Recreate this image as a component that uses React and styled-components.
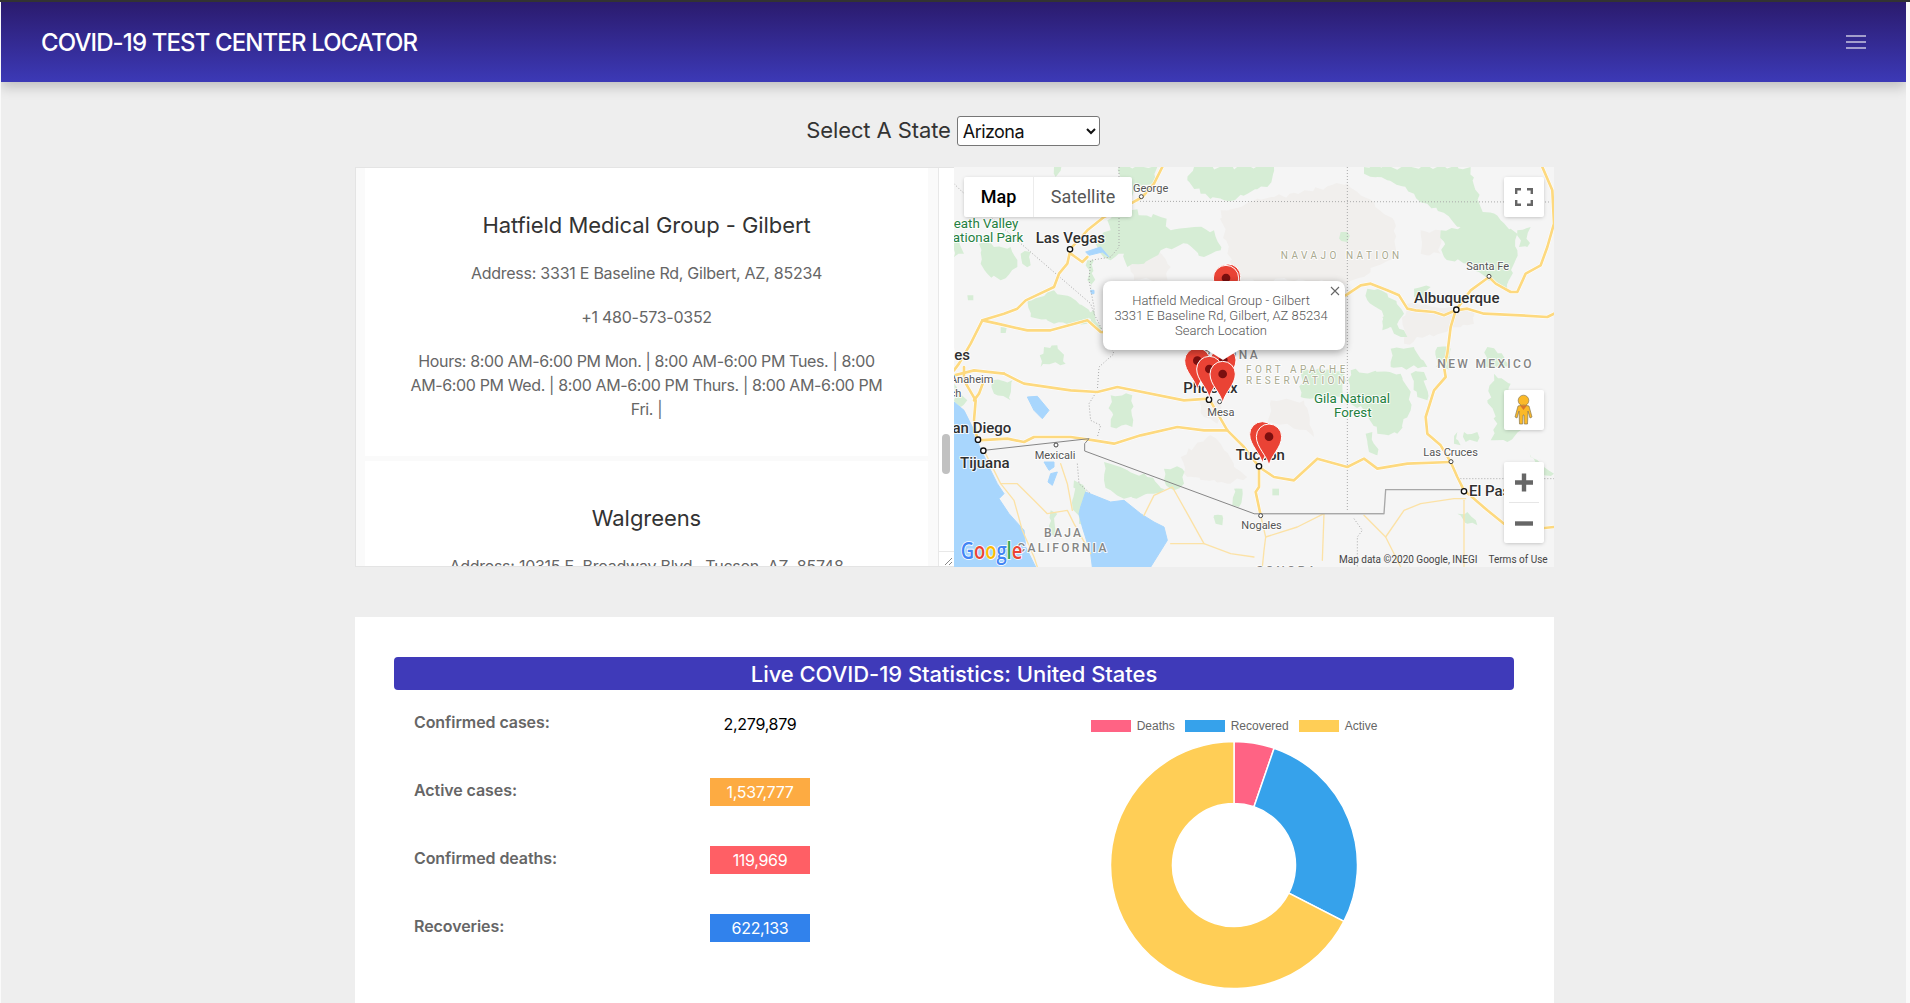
import React from "react";
import styled, { createGlobalStyle, css } from "styled-components";

const Global = createGlobalStyle`
  html, body { margin: 0; padding: 0; height: 100%; overflow: hidden; background: #fafafa; }
  body { font-family: Inter, "Liberation Sans", sans-serif; }
  #root { height: 100%; }
`;

const Page = styled.div`
  height: 1003px;
  overflow: hidden;
  display: flex;
  flex-direction: column;
  border-top: 2px solid #333;
  box-sizing: border-box;
`;
const Shell = styled.div`
  flex: 1;
  margin: 0 4px 0 1px;
  background: #eee;
  min-height: 0;
  overflow: hidden;
`;
const Navbar = styled.header`
  height: 80px;
  display: flex;
  align-items: center;
  justify-content: space-between;
  padding: 0 40px 0 40px;
  background: linear-gradient(180deg, #2b1b6e 0%, #3c39b6 100%);
  box-shadow: 0 5px 12px rgba(0, 0, 0, 0.2);
`;
const Brand = styled.div`
  color: #fff;
  font-size: 24px;
  font-weight: 500;
  letter-spacing: -0.88px;
  white-space: nowrap;
`;
const Burger = styled.div`
  width: 20px;
  display: flex;
  flex-direction: column;
  gap: 4px;
  span { display: block; height: 2px; background: rgba(255, 255, 255, 0.55); }
`;
const Content = styled.main`
  width: 1199px;
  margin-left: 354px;
`;
const SelectRow = styled.div`
  display: flex;
  align-items: center;
  justify-content: center;
  gap: 6px;
  height: 30px;
  margin: 34px 3px 21px 0;
`;
const SelectLabel = styled.label`
  margin-top: -3px;
  font-size: 22px;
  color: #333;
  letter-spacing: -0.1px;
`;
const StateSelect = styled.select`
  width: 143px;
  height: 30px;
  font: 400 18px Inter, sans-serif;
  letter-spacing: -0.55px;
  color: #111;
  background: #fff;
  border: 1px solid #767676;
  border-radius: 3px;
  padding: 0 0 0 1px;
`;
const MapSection = styled.section`
  display: flex;
  height: 400px;
  background: #fff;
  box-shadow: 0 0 0 1px #e6e6e6 inset;
`;
const ListPane = styled.div`
  position: relative;
  width: 599px;
  flex: none;
  overflow: hidden;
  box-sizing: border-box;
  border: 1px solid #e4e4e4;
  border-right: none;
  background: #fafafa;
  padding: 0 26px 0 9px;
`;
const Place = styled.article`
  background: #fff;
  padding: 41px 42px 35px;
  margin-bottom: 5px;
  text-align: center;
`;
const PlaceName = styled.h3`
  margin: 0 0 20px;
  font-size: 22px;
  line-height: 32px;
  font-weight: 400;
  letter-spacing: -0.07px;
  color: #333;
`;
const PlaceLine = styled.p`
  margin: 0 0 20px;
  font-size: 16px;
  line-height: 24px;
  letter-spacing: ${(p) => (p.$tight ? "-0.37px" : "-0.25px")};
  color: #666;
  &:last-child { margin-bottom: 0; }
`;
const ScrollTrack = styled.div`
  position: absolute;
  top: 0;
  right: 0;
  bottom: 0;
  width: 15px;
  background: #fff;
  border-left: 1px solid #e8e8e8;
`;
const ScrollThumb = styled.div`
  position: absolute;
  top: 266px;
  left: 3px;
  width: 8px;
  height: 40px;
  border-radius: 4px;
  background: #c1c1c1;
`;
const Resizer = styled.svg`
  position: absolute;
  left: 0;
  bottom: 0;
  width: 15px;
  height: 14px;
  border-top: 1px solid #e8e8e8;
`;
const MapPane = styled.div`
  position: relative;
  width: 600px;
  flex: none;
  overflow: hidden;
  background: #f5f5f5;
  font-family: Roboto, sans-serif;
`;
const MapCanvas = styled.svg`
  display: block;
  width: 600px;
  height: 400px;
`;
const labelKinds = {
  city: css`font-size: 45px; font-weight: 500; fill: #2f2f2f;`,
  town: css`font-size: 33px; font-weight: 400; fill: #555;`,
  park: css`font-size: 40px; font-weight: 400; fill: #24803f;`,
  state: css`font-size: 36px; font-weight: 500; fill: #858585; letter-spacing: 7px;`,
  land: css`font-size: 30px; font-weight: 400; fill: #a9a98f; letter-spacing: 10.5px;`,
};
const MapLabel = styled.text`
  font-family: Roboto, sans-serif;
  paint-order: stroke;
  stroke: rgba(255, 255, 255, 0.85);
  stroke-width: 6px;
  stroke-linejoin: round;
  ${(p) => labelKinds[p.$kind]}
`;
const ControlBox = styled.div`
  position: absolute;
  top: ${(p) => p.$top}px;
  display: flex;
  background: #fff;
  border-radius: 2px;
  box-shadow: 0 1px 4px -1px rgba(0, 0, 0, 0.3);
`;
const TypeControl = styled(ControlBox)`
  left: 10px;
  height: 40px;
`;
const TypeButton = styled.div`
  width: ${(p) => p.$w}px;
  padding-bottom: 1px;
  display: flex;
  align-items: center;
  justify-content: center;
  font-size: 18px;
  font-weight: ${(p) => (p.$active ? 500 : 400)};
  color: ${(p) => (p.$active ? "#000" : "#565656")};
  & + & { border-left: 1px solid #ececec; }
`;
const SquareControl = styled(ControlBox)`
  right: 10px;
  width: 40px;
  height: ${(p) => p.$h || 40}px;
  flex-direction: column;
  align-items: center;
  justify-content: center;
`;
const ZoomStep = styled.svg`
  width: 40px;
  height: 40px;
  display: block;
`;
const ZoomRule = styled.div`
  width: 30px;
  height: 1px;
  background: #e6e6e6;
`;
const Popup = styled.div`
  position: absolute;
  left: 149px;
  top: 114px;
  width: 242px;
  height: 69px;
  box-sizing: border-box;
  padding: 12px 6px 0 0;
  background: #fff;
  border-radius: 8px;
  box-shadow: 0 2px 7px 1px rgba(0, 0, 0, 0.3);
  text-align: center;
  font-size: 13px;
  font-weight: 300;
  line-height: 15px;
  color: #555;
  &::after {
    content: "";
    position: absolute;
    left: 104px;
    top: 69px;
    border-left: 16px solid transparent;
    border-right: 16px solid transparent;
    border-top: 10px solid #fff;
  }
`;
const PopupClose = styled.svg`
  position: absolute;
  right: 5px;
  top: 5px;
  width: 10px;
  height: 10px;
`;
const Attribution = styled.div`
  position: absolute;
  left: 385px;
  bottom: 2px;
  display: flex;
  gap: 11px;
  font-size: 10px;
  line-height: 10px;
  color: #444;
  white-space: nowrap;
`;
const StatsCard = styled.section`
  margin-top: 50px;
  height: 420px;
  background: #fff;
  padding: 40px 40px 0 39px;
  box-sizing: border-box;
`;
const StatsBanner = styled.h2`
  margin: 0;
  height: 33px;
  line-height: 34px;
  border-radius: 4px;
  background: #3f3ab9;
  color: #fff;
  text-align: center;
  font-size: 22px;
  font-weight: 500;
  letter-spacing: -0.04px;
`;
const StatsBody = styled.div`
  display: grid;
  grid-template-columns: 1fr 1fr;
`;
const StatList = styled.div`
  padding-left: 20px;
`;
const StatRow = styled.div`
  height: 68px;
  display: grid;
  grid-template-columns: 296px 100px;
  align-items: center;
`;
const StatLabel = styled.div`
  margin-top: -5px;
  font-size: 16px;
  font-weight: 600;
  letter-spacing: -0.08px;
  color: #666;
`;
const StatValue = styled.div`
  height: 28px;
  line-height: 28px;
  text-align: center;
  font-size: 16px;
  letter-spacing: -0.3px;
  color: ${(p) => (p.$bg ? "#fff" : "#000")};
  background: ${(p) => p.$bg || "transparent"};
`;
const ChartPane = styled.div`
  display: flex;
  flex-direction: column;
  align-items: center;
  padding-top: 30px;
`;
const Legend = styled.div`
  display: flex;
  gap: 10px;
  height: 12px;
  font: 12px "Liberation Sans", sans-serif;
  color: #666;
`;
const LegendItem = styled.div`
  display: flex;
  align-items: center;
  gap: 6px;
  line-height: 12px;
`;
const Swatch = styled.span`
  width: 40px;
  height: 12px;
  background: ${(p) => p.$c};
`;
const Donut = styled.svg`
  display: block;
  width: 250px;
  height: 250px;
  margin-top: 10px;
`;

const GREEN = [
  "75,230 170,240 190,300 140,340 100,320 80,290",
  "200,260 230,255 230,295 205,290",
  "300,0 322,0 305,30",
  "495,0 610,0 600,50 540,70 530,100 530,130 620,150 650,190 720,180 780,190 800,250 750,270 700,230 620,250 570,290 520,300 510,260 470,280 430,250 420,210 470,190 460,160 495,110",
  "720,0 960,0 940,60 810,100 740,80 700,40",
  "220,400 300,370 350,390 410,440 400,470 300,470 230,450",
  "400,280 420,280 415,370 400,340",
  "395,430 420,430 440,490 410,470",
  "270,540 310,535 335,590 260,600",
  "140,480 158,482 155,498 140,498",
  "40,385 58,385 58,400 42,400",
  "1230,0 1550,0 1580,120 1640,160 1690,200 1680,290 1660,370 1600,340 1540,290 1470,270 1460,190 1520,180 1420,110 1380,80 1300,40 1230,20",
  "1690,190 1730,180 1720,240 1695,240",
  "1240,365 1300,380 1350,440 1330,470 1285,490 1290,450 1240,400",
  "1285,450 1320,440 1350,490 1360,510 1320,500",
  "1380,365 1430,360 1410,400 1380,390",
  "1310,545 1380,540 1420,600 1310,600",
  "1450,540 1490,545 1500,600 1445,600",
  "1600,540 1650,570 1670,600 1590,600",
  "1160,195 1180,195 1180,225 1162,222",
  "1190,610 1340,620 1360,660 1370,730 1330,800 1270,800 1230,730 1190,710",
  "1370,620 1410,615 1420,700 1390,690",
  "1235,800 1255,795 1270,865 1245,855",
  "1510,795 1520,835 1500,830",
  "1530,795 1570,795 1570,825 1535,825",
  "1620,620 1670,650 1660,730 1700,790 1660,825 1610,820 1630,770 1600,700",
  "1710,840 1770,900 1800,920 1770,925",
  "1510,1040 1540,1035 1570,1075 1540,1070",
  "955,965 975,965 975,985 955,985",
  "470,685 535,685 535,780 470,780",
  "630,905 685,905 690,950 660,970 630,940",
  "450,885 500,900 580,930 640,970 600,980 510,995 470,970 450,940",
  "360,940 395,970 385,1030 405,1100 375,1070 355,1000",
  "840,965 865,965 855,1020 835,1015",
  "780,1045 805,1045 805,1075 785,1070",
  "115,640 175,640 170,700 120,680",
  "290,1030 310,1040 300,1110 285,1090",
  "0,200 20,210 30,260 0,270",
  "0,650 40,700 20,720 0,700",
  "1040,610 1170,610 1170,690 1040,690",
];
const BEIGE = [
  "800,130 960,90 1180,50 1320,160 1320,260 1230,330 1180,350 1000,340 860,340 820,260",
  "520,280 610,250 650,300 640,340 540,340",
  "1400,190 1460,190 1460,260 1400,260",
  "950,700 1050,700 1080,810 1000,770 940,770",
  "680,870 770,805 800,830 840,900 880,930 820,950 700,930",
  "735,700 800,700 790,770 750,750",
  "1350,410 1560,430 1560,470 1350,530",
];
const WATER = [
  "0,705 30,730 60,790 75,835 110,910 130,950 150,980 135,995 165,1040 210,1090 215,1140 240,1190 245,1200 0,1200",
  "395,975 420,985 470,1005 510,1000 560,1040 600,1065 630,1080 640,1120 590,1200 415,1200 410,1160 385,1080 375,1040 380,1020",
  "220,690 250,688 285,730 265,755 240,730",
  "270,885 300,885 300,900 285,910",
  "290,920 310,915 295,955 282,945",
  "395,255 440,240 465,270 445,255 405,265",
  "410,370 420,370 420,380 412,380",
];
const MAJOR = [
  "625,0 600,50 565,90 530,110 450,150 400,190 350,245 340,290 315,320 300,360 215,400 190,425 150,440 85,460 50,530 15,590 0,610",
  "350,260 385,285 400,270",
  "85,460 130,470 220,490 290,490 400,460 440,495 500,500",
  "1175,385 1220,355 1250,350 1300,370 1335,385 1360,425 1385,430 1440,435 1470,445 1505,430 1540,425 1590,440 1700,445 1780,450 1800,440",
  "1505,430 1550,370 1605,330 1625,350 1670,375 1690,375 1715,320 1760,295 1780,240 1800,170 1795,70 1765,0",
  "1505,430 1490,480 1480,560 1470,600 1475,630 1440,670 1415,750 1420,800 1460,835 1490,885 1510,930 1530,970 1560,995 1600,1030 1650,1070 1700,1090 1800,1080",
  "915,900 960,930 1020,940 1090,875 1180,900 1230,875 1270,905 1360,890 1490,885",
  "150,620 210,650 350,670 430,675 490,660 690,700 765,695 820,790 870,840 915,900 915,960 905,975 920,1045",
  "70,820 160,815 210,825 240,810 350,810 420,820 480,830 560,805 670,780 750,790 820,790",
  "70,820 60,760 65,700 30,640 30,600",
  "0,625 60,610 150,620",
  "60,700 75,680 90,640",
];
const MINOR = [
  "90,850 140,950 190,950 240,1000 280,1040 340,1030 360,1070 410,1160",
  "140,950 180,1000 205,1090 240,1170 250,1200",
  "320,890 340,950 355,1030",
  "570,1045 600,985 655,960 700,1040 750,1130 830,1160 900,1170",
  "920,1045 935,1110 930,1150 925,1200",
  "1110,1040 1030,1080 935,1110",
  "1110,1040 1105,1180",
  "1230,1045 1295,1110 1350,1030 1400,1010 1500,995 1535,995",
  "1530,1000 1530,1200",
  "1295,1110 1340,1200",
  "650,1130 750,1130",
];
const DOTTED = [
  "540,103 1800,105",
  "1180,0 1180,1035",
  "0,50 20,70 195,225 410,410 420,440",
  "495,0 495,240 470,270 410,280 405,340 420,420 420,440 480,560 435,600 430,670 405,710 410,760 440,775 430,810",
  "1510,935 1800,935",
  "370,890 375,950 410,980",
  "1200,1055 1225,1090 1210,1110 1210,1200",
];
const LABELS = [
  ["George", 537, 75, "town"],
  ["Death Valley", -27, 183, "park"],
  ["National Park", 208, 225, "park", "end"],
  ["Las Vegas", 245, 229, "city"],
  ["Los Angeles", 48, 578, "city", "end"],
  ["Anaheim", 118, 648, "town", "end"],
  ["Long Beach", 22, 690, "town", "end"],
  ["San Diego", 172, 797, "city", "end"],
  ["Tijuana", 18, 902, "city"],
  ["Mexicali", 242, 875, "town"],
  ["Phoenix", 688, 678, "city"],
  ["Mesa", 760, 748, "town"],
  ["Tucson", 845, 878, "city"],
  ["Nogales", 862, 1087, "town"],
  ["BAJA", 270, 1110, "state"],
  ["CALIFORNIA", 190, 1155, "state"],
  ["SONORA", 906, 1224, "state"],
  ["NAVAJO NATION", 980, 275, "land"],
  ["ARIZONA", 918, 575, "state", "end"],
  ["FORT APACHE", 876, 618, "land"],
  ["RESERVATION", 876, 650, "land"],
  ["Gila National", 1080, 708, "park"],
  ["Forest", 1140, 750, "park"],
  ["Santa Fe", 1537, 310, "town"],
  ["Albuquerque", 1380, 407, "city"],
  ["NEW MEXICO", 1450, 604, "state"],
  ["Las Cruces", 1408, 868, "town"],
  ["El Paso", 1545, 988, "city"],
];
const BIG_DOTS = [[348, 247], [915, 898], [765, 698], [72, 818], [88, 851], [1530, 973], [1507, 428]];
const SMALL_DOTS = [[562, 89], [1605, 328], [306, 834], [797, 704], [920, 1046], [1491, 884]];
const PINS = [
  [822, 417], [816, 421], [808, 667], [730, 669], [766, 694], [806, 709], [925, 890], [945, 897],
];

/* Breaks a coarse polygon's straight edges into an irregular terrain outline. */
const roughen = (points, seed) => {
  const pts = points.split(" ").map((p) => p.split(",").map(Number));
  let s = seed * 9301 + 49297;
  const rand = () => {
    s = (s * 9301 + 49297) % 233280;
    return s / 233280 - 0.5;
  };
  const out = [];
  pts.forEach(([x0, y0], i) => {
    const [x1, y1] = pts[(i + 1) % pts.length];
    const len = Math.hypot(x1 - x0, y1 - y0);
    const steps = Math.max(1, Math.round(len / 16));
    for (let k = 0; k < steps; k++) {
      const t = k / steps;
      const amp = k === 0 ? 0 : 16;
      out.push(`${(x0 + (x1 - x0) * t + rand() * amp).toFixed(1)},${(y0 + (y1 - y0) * t + rand() * amp).toFixed(1)}`);
    }
  });
  return out.join(" ");
};

const Pin = ({ x, y }) => (
  <g transform={`translate(${x} ${y})`}>
    <path d="M0 0C-4 -30 -38 -55 -38 -88A38 38 0 1 1 38 -88C38 -55 4 -30 0 0Z" fill="#ea4335" stroke="#fff" strokeWidth="3" />
    <circle cx="0" cy="-88" r="13" fill="#7b0f0f" />
  </g>
);

const MapDrawing = () => (
  <MapCanvas viewBox="0 0 1800 1200">
    <g fill="#f1efed">
      {BEIGE.map((p, i) => <polygon key={p} points={roughen(p, i + 1)} />)}
    </g>
    <g fill="#d6edd5">
      {GREEN.map((p, i) => <polygon key={p} points={roughen(p, i + 11)} />)}
    </g>
    <g fill="#a8d6fd" stroke="#a8d6fd" strokeWidth="3" strokeLinejoin="round">
      {WATER.map((p) => <polygon key={p} points={p} />)}
    </g>
    <g fill="none" stroke="#a9a9a9" strokeWidth="3" strokeDasharray="3 6">
      {DOTTED.map((p) => <polyline key={p} points={p} />)}
    </g>
    <g fill="none" strokeLinejoin="round" strokeLinecap="round">
      {MINOR.map((p) => <polyline key={p} points={p} stroke="#fce2a6" strokeWidth="4" />)}
      {MAJOR.map((p) => <polyline key={p} points={p} stroke="#fff" strokeWidth="11" />)}
      {MAJOR.map((p) => <polyline key={"y" + p} points={p} stroke="#fdd97f" strokeWidth="8" />)}
    </g>
    <polyline points="90,850 405,815 392,830 392,852 900,1040 1290,1040" fill="none" stroke="#868686" strokeWidth="3" />
    <polyline points="900,1040 1290,1040 1295,968 1520,968" fill="none" stroke="#a8a8a8" strokeWidth="4" />
    {LABELS.map(([t, x, y, k, anchor]) => (
      <MapLabel key={t} x={x} y={y} $kind={k} textAnchor={anchor || "start"}>{t}</MapLabel>
    ))}
    {BIG_DOTS.map(([x, y]) => <circle key={x} cx={x} cy={y} r="8" fill="#fff" stroke="#111" strokeWidth="4" />)}
    {SMALL_DOTS.map(([x, y]) => <circle key={x} cx={x} cy={y} r="6" fill="#fff" stroke="#444" strokeWidth="3" />)}
    {PINS.map(([x, y]) => <Pin key={`${x}-${y}`} x={x} y={y} />)}
    <text x="20" y="1175" fontFamily="Open Sans, sans-serif" fontSize="68" fontWeight="600" textLength="185" lengthAdjust="spacingAndGlyphs" stroke="#fff" strokeWidth="5" style={{ paintOrder: "stroke" }}>
      <tspan fill="#4285f4">G</tspan><tspan fill="#ea4335">o</tspan><tspan fill="#fbbc05">o</tspan><tspan fill="#4285f4">g</tspan><tspan fill="#34a853">l</tspan><tspan fill="#ea4335">e</tspan>
    </text>
  </MapCanvas>
);

const DATA = [
  { label: "Deaths", value: 119969, color: "#ff6384" },
  { label: "Recovered", value: 622133, color: "#36a2eb" },
  { label: "Active", value: 1537777, color: "#ffce56" },
];
const arcPath = (a0, a1, R, r, cx, cy) => {
  const pt = (rad, a) => `${(cx + rad * Math.cos(a)).toFixed(2)} ${(cy + rad * Math.sin(a)).toFixed(2)}`;
  const large = a1 - a0 > Math.PI ? 1 : 0;
  return `M${pt(R, a0)}A${R} ${R} 0 ${large} 1 ${pt(R, a1)}L${pt(r, a1)}A${r} ${r} 0 ${large} 0 ${pt(r, a0)}Z`;
};
const DonutChart = () => {
  const total = DATA.reduce((s, d) => s + d.value, 0);
  let angle = -Math.PI / 2;
  return (
    <Donut viewBox="0 0 250 250">
      {DATA.map((d) => {
        const next = angle + (d.value / total) * Math.PI * 2;
        const path = arcPath(angle, next, 123.5, 61.5, 125, 123);
        angle = next;
        return <path key={d.label} d={path} fill={d.color} stroke="#fff" strokeWidth="1.5" />;
      })}
    </Donut>
  );
};

const PLACES = [
  {
    name: "Hatfield Medical Group - Gilbert",
    lines: [
      "Address: 3331 E Baseline Rd, Gilbert, AZ, 85234",
      "+1 480-573-0352",
      "Hours: 8:00 AM-6:00 PM Mon. | 8:00 AM-6:00 PM Tues. | 8:00 AM-6:00 PM Wed. | 8:00 AM-6:00 PM Thurs. | 8:00 AM-6:00 PM Fri. |",
    ],
  },
  { name: "Walgreens", lines: ["Address: 10315 E. Broadway Blvd., Tucson, AZ, 85748"] },
];
const STATS = [
  { label: "Confirmed cases:", value: "2,279,879" },
  { label: "Active cases:", value: "1,537,777", bg: "#fdab42" },
  { label: "Confirmed deaths:", value: "119,969", bg: "#ff5f65" },
  { label: "Recoveries:", value: "622,133", bg: "#3182ec" },
];

export default function App() {
  return (
    <Page>
      <Global />
      <Shell>
        <Navbar>
          <Brand>COVID-19 TEST CENTER LOCATOR</Brand>
          <Burger><span /><span /><span /></Burger>
        </Navbar>
        <Content>
          <SelectRow>
            <SelectLabel htmlFor="state">Select A State</SelectLabel>
            <StateSelect id="state" defaultValue="Arizona">
              <option>Arizona</option>
              <option>California</option>
              <option>Texas</option>
            </StateSelect>
          </SelectRow>
          <MapSection>
            <ListPane>
              {PLACES.map((p) => (
                <Place key={p.name}>
                  <PlaceName>{p.name}</PlaceName>
                  {p.lines.map((l) => <PlaceLine key={l} $tight={l.startsWith("Hours")}>{l}</PlaceLine>)}
                </Place>
              ))}
              <ScrollTrack>
                <ScrollThumb />
                <Resizer viewBox="0 0 15 14">
                  <path d="M6 13L13 6M10 13L13 10" stroke="#888" strokeWidth="1" fill="none" />
                </Resizer>
              </ScrollTrack>
            </ListPane>
            <MapPane>
              <MapDrawing />
              <TypeControl $top={10}>
                <TypeButton $w={69} $active>Map</TypeButton>
                <TypeButton $w={98}>Satellite</TypeButton>
              </TypeControl>
              <SquareControl $top={10}>
                <svg width="18" height="18" viewBox="0 0 18 18" fill="none" stroke="#666" strokeWidth="2.4">
                  <path d="M1.2 6V1.2H6M12 1.2H16.8V6M16.8 12V16.8H12M6 16.8H1.2V12" />
                </svg>
              </SquareControl>
              <SquareControl $top={223}>
                <svg width="40" height="40" viewBox="0 0 40 40">
                  <circle cx="19.5" cy="10.5" r="5.3" fill="#fbb928" stroke="#8a7a55" strokeWidth="0.7" />
                  <path d="M14 16Q19.5 14 25 16L28 27L26 28L24 21L23.5 34L20.3 34L20 25L19 25L18.7 34L15.5 34L15 21L13 28L11 27Z" fill="#fbb928" stroke="#8a7a55" strokeWidth="0.7" />
                  <path d="M16 15.5L19.5 20L23 15.5Z" fill="#d9762b" />
                </svg>
              </SquareControl>
              <SquareControl $top={295} $h={81}>
                <ZoomStep viewBox="0 0 40 40">
                  <path d="M11 20.5H29M20 11.5V29.5" stroke="#666" strokeWidth="4.4" fill="none" />
                </ZoomStep>
                <ZoomRule />
                <ZoomStep viewBox="0 0 40 40">
                  <path d="M11 20.5H29" stroke="#666" strokeWidth="4.4" fill="none" />
                </ZoomStep>
              </SquareControl>
              <Popup>
                Hatfield Medical Group - Gilbert<br />
                3331 E Baseline Rd, Gilbert, AZ 85234<br />
                Search Location
                <PopupClose viewBox="0 0 10 10">
                  <path d="M1 1L9 9M9 1L1 9" stroke="#666" strokeWidth="1.1" />
                </PopupClose>
              </Popup>
              <Attribution>
                <span>Map data ©2020 Google, INEGI</span>
                <span>Terms of Use</span>
              </Attribution>
            </MapPane>
          </MapSection>
          <StatsCard>
            <StatsBanner>Live COVID-19 Statistics: United States</StatsBanner>
            <StatsBody>
              <StatList>
                {STATS.map((s) => (
                  <StatRow key={s.label}>
                    <StatLabel>{s.label}</StatLabel>
                    <StatValue $bg={s.bg}>{s.value}</StatValue>
                  </StatRow>
                ))}
              </StatList>
              <ChartPane>
                <Legend>
                  {DATA.map((d) => (
                    <LegendItem key={d.label}>
                      <Swatch $c={d.color} />
                      {d.label}
                    </LegendItem>
                  ))}
                </Legend>
                <DonutChart />
              </ChartPane>
            </StatsBody>
          </StatsCard>
        </Content>
      </Shell>
    </Page>
  );
}
